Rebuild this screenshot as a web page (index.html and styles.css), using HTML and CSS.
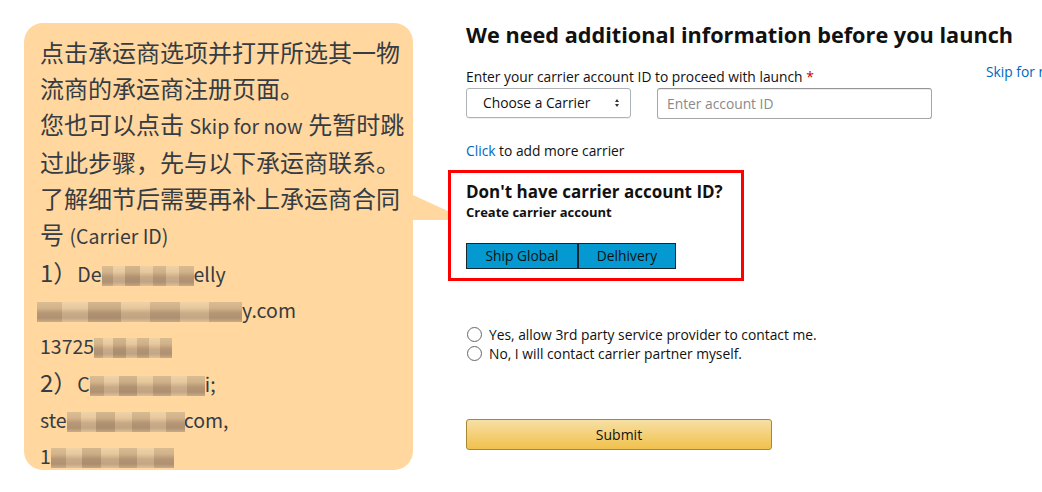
FILE: index.html
```html
<!DOCTYPE html>
<html>
<head>
<meta charset="utf-8">
<link rel="stylesheet" href="styles.css">
</head>
<body>
<div class="page">
  <div class="bubble">
    <p>点击承运商选项并打开所选其一物流商的承运商注册页面。</p>
    <p>您也可以点击 <span class="lat">Skip for now</span> 先暂时跳过此步骤，先与以下承运商联系。了解细节后需要再补上承运商合同号 <span class="lat">(Carrier ID)</span></p>
    <p>1）<span class="lat">De<span class="blur w1"></span>elly</span></p>
    <p class="lat"><span class="blur w2"></span>y.com</p>
    <p class="lat">13725<span class="blur w3"></span></p>
    <p>2）<span class="lat">C<span class="blur w4"></span>i;</span></p>
    <p class="lat">ste<span class="blur w5"></span>.com,</p>
    <p class="lat">1<span class="blur w6"></span></p>
  </div>
  <div class="form">
    <h1 class="title">We need additional information before you launch</h1>
    <div class="label-row">
      <span class="label">Enter your carrier account ID to proceed with launch <span class="req">*</span></span>
      <a class="skip">Skip for now</a>
    </div>
    <div class="inputs">
      <div class="select">Choose a Carrier<span class="arrows"><i class="up"></i><i class="down"></i></span></div>
      <div class="input">Enter account ID</div>
    </div>
    <div class="more"><a class="link">Click</a> to add more carrier</div>
    <div class="redbox">
      <div class="rb-title">Don't have carrier account ID?</div>
      <div class="rb-sub">Create carrier account</div>
      <div class="btns">
        <span class="cbtn b1">Ship Global</span><span class="cbtn b2">Delhivery</span>
      </div>
    </div>
    <div class="radios">
      <label class="radio"><span class="circle"></span>Yes, allow 3rd party service provider to contact me.</label>
      <label class="radio"><span class="circle"></span>No, I will contact carrier partner myself.</label>
    </div>
    <div class="submit">Submit</div>
  </div>
</div>
</body>
</html>
```
FILE: styles.css
```css
html, body { margin: 0; padding: 0; background: #fff; }
body { width: 1042px; height: 492px; overflow: hidden; }
.page { display: flex; align-items: flex-start; }

.bubble {
  position: relative;
  box-sizing: border-box;
  margin: 23px 0 0 24px;
  width: 389px;
  height: 447px;
  padding: 11px 0 0 16px;
  background: #ffd79f;
  border-radius: 19px;
  font-family: "Noto Sans CJK SC", "Noto Sans", sans-serif;
  font-size: 24px;
  line-height: 36px;
  color: #363c43;
}
.bubble::after {
  content: "";
  position: absolute;
  left: 389px;
  top: 172px;
  width: 37px;
  height: 25px;
  background: #ffd79f;
  clip-path: polygon(0 0, 100% 68%, 100% 100%, 0 100%);
}
.bubble p { margin: 0; width: 381px; }
.lat { font-size: 19.5px; }
.blur {
  display: inline-block;
  height: 20px;
  vertical-align: -4px;
  background:
    linear-gradient(90deg, rgba(140,110,80,.18) 0 12%, rgba(255,235,200,.15) 12% 25%, rgba(120,95,70,.22) 25% 41%, rgba(255,230,190,.12) 41% 55%, rgba(130,105,80,.2) 55% 70%, rgba(250,225,185,.18) 70% 84%, rgba(140,110,85,.2) 84% 100%),
    linear-gradient(#edcfa2, #e2c397 30%, #c0a07e 55%, #b79a7a 80%, #d9ba90);
  filter: blur(0.5px);
}
.w1 { width: 92px; }
.w2 { width: 205px; margin-left: -3px; }
.w3 { width: 78px; }
.w4 { width: 115px; }
.w5 { width: 118px; margin-right: -6px; }
.w6 { width: 123px; }

.form {
  margin-left: 53px;
  flex: 1;
  font-family: "Open Sans", "Liberation Sans", sans-serif;
  font-size: 13.8px;
  color: #111;
}
.title {
  margin: 22px 0 0 0;
  font-size: 21.7px;
  line-height: 26px;
  font-weight: 700;
  color: #111;
  white-space: nowrap;
}
.label-row { display: grid; grid-template-columns: 520px auto; margin-top: 20px; height: 18px; }
.label { line-height: 18px; white-space: nowrap; }
.req { color: #c40000; }
.skip { line-height: 18px; color: #0066c0; margin-top: -5px; white-space: nowrap; }
.inputs { display: flex; gap: 26px; margin-top: 2px; margin-left: 0; }
.select {
  position: relative;
  box-sizing: border-box;
  width: 165px; height: 30px;
  border: 1px solid #adb1b8;
  border-radius: 3px;
  box-shadow: 0 1px 0 rgba(0,0,0,.06);
  padding-left: 16px;
  line-height: 28px; color: #111;
}
.arrows {
  position: absolute; right: 11px; top: 10px;
  display: flex; flex-direction: column; gap: 2px;
}
.up, .down { display: block; width: 0; height: 0; border-left: 2.5px solid transparent; border-right: 2.5px solid transparent; }
.up { border-bottom: 3px solid #333; }
.down { border-top: 3px solid #333; }
.input {
  box-sizing: border-box;
  width: 275px; height: 31px;
  border: 1px solid #a6a6a6;
  border-top-color: #949494;
  border-radius: 3px;
  padding-left: 9px;
  line-height: 29px; color: #8a8a8a;
  box-shadow: inset 0 1px 0 rgba(0,0,0,.07);
}
.more { margin-top: 23px; line-height: 18px; }
.link { color: #0066c0; }
.redbox {
  box-sizing: border-box;
  margin: 10px 0 0 -18px;
  width: 296px;
  height: 111px;
  border: 3px solid #ff0000;
  padding: 9px 0 0 15px;
  background: #fff;
  position: relative;
  z-index: 1;
}
.rb-title { font-size: 17px; font-weight: 700; line-height: 20px; white-space: nowrap; }
.rb-sub { font-size: 13px; font-weight: 700; line-height: 16px; margin-top: 2px; }
.btns { display: flex; margin-top: 23px; }
.cbtn {
  box-sizing: border-box;
  height: 26px;
  background: #0599d2;
  border: 1px solid #17262f;
  line-height: 24px; text-align: center; color: #111;
}
.b1 { width: 112px; }
.b2 { width: 99px; border-left: 2px solid #17262f; margin-left: -1px; }
.radios { margin-top: 44px; line-height: 19px; }
.radio { display: flex; align-items: center; }
.circle {
  box-sizing: border-box;
  width: 15px; height: 15px; border: 1px solid #666; border-radius: 50%;
  margin-left: 1px; margin-right: 7px; background: #fff;
}
.submit {
  box-sizing: border-box;
  margin-top: 56px;
  width: 306px; height: 31px;
  border: 1px solid #a88734;
  border-radius: 3px;
  background: linear-gradient(#f7dfa5, #f0c14b);
  font-size: 14px; line-height: 29px; text-align: center; color: #111;
}
```
